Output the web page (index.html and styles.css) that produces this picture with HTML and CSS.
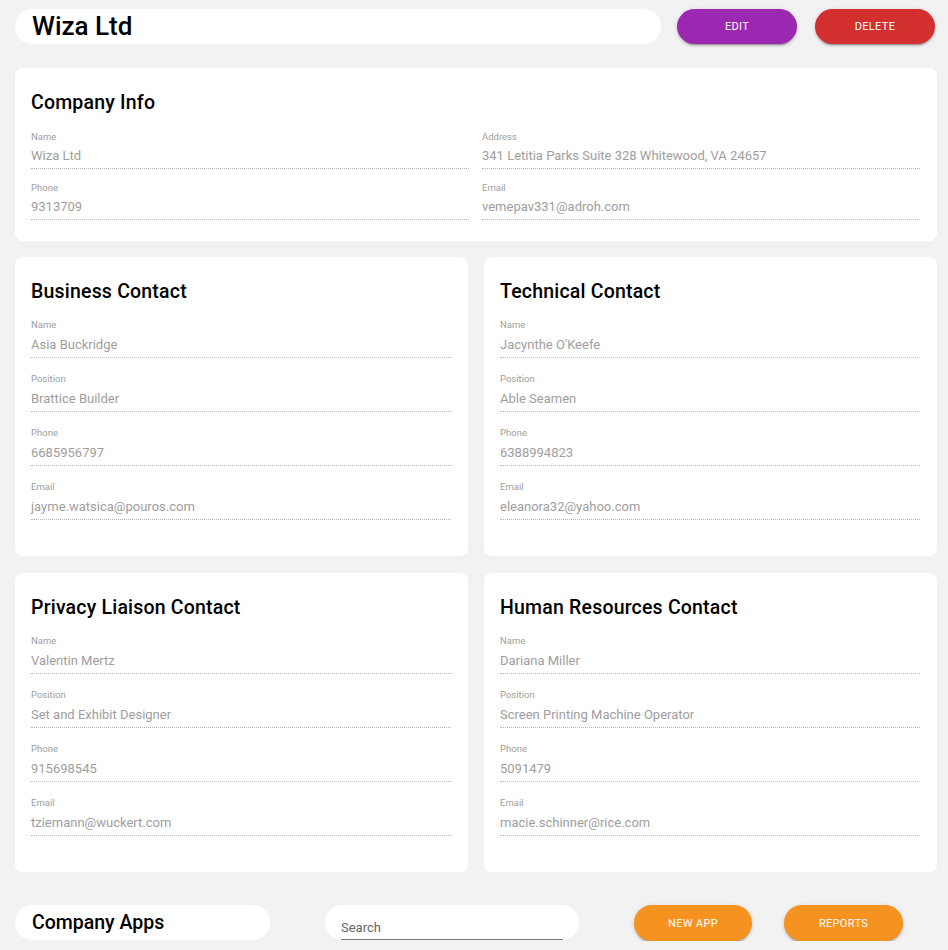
FILE: index.html
```html
<!DOCTYPE html>
<html>
<head>
<meta charset="utf-8">
<link rel="stylesheet" href="styles.css">
</head>
<body>
<div class="page">
  <div class="topbar">
    <div class="namebox">Wiza Ltd</div>
    <button class="btn btn-edit">Edit</button>
    <button class="btn btn-delete">Delete</button>
  </div>

  <section class="card info">
    <h2 class="card-title">Company Info</h2>
    <div class="info-grid">
      <div class="field"><div class="label">Name</div><div class="value">Wiza Ltd</div></div>
      <div class="field"><div class="label">Address</div><div class="value">341 Letitia Parks Suite 328 Whitewood, VA 24657</div></div>
      <div class="field"><div class="label">Phone</div><div class="value">9313709</div></div>
      <div class="field"><div class="label">Email</div><div class="value">vemepav331@adroh.com</div></div>
    </div>
  </section>

  <div class="contacts">
    <section class="card contact">
      <h2 class="card-title">Business Contact</h2>
      <div class="field"><div class="label">Name</div><div class="value">Asia Buckridge</div></div>
      <div class="field"><div class="label">Position</div><div class="value">Brattice Builder</div></div>
      <div class="field"><div class="label">Phone</div><div class="value">6685956797</div></div>
      <div class="field"><div class="label">Email</div><div class="value">jayme.watsica@pouros.com</div></div>
    </section>
    <section class="card contact">
      <h2 class="card-title">Technical Contact</h2>
      <div class="field"><div class="label">Name</div><div class="value">Jacynthe O'Keefe</div></div>
      <div class="field"><div class="label">Position</div><div class="value">Able Seamen</div></div>
      <div class="field"><div class="label">Phone</div><div class="value">6388994823</div></div>
      <div class="field"><div class="label">Email</div><div class="value">eleanora32@yahoo.com</div></div>
    </section>
    <section class="card contact">
      <h2 class="card-title">Privacy Liaison Contact</h2>
      <div class="field"><div class="label">Name</div><div class="value">Valentin Mertz</div></div>
      <div class="field"><div class="label">Position</div><div class="value">Set and Exhibit Designer</div></div>
      <div class="field"><div class="label">Phone</div><div class="value">915698545</div></div>
      <div class="field"><div class="label">Email</div><div class="value">tziemann@wuckert.com</div></div>
    </section>
    <section class="card contact">
      <h2 class="card-title">Human Resources Contact</h2>
      <div class="field"><div class="label">Name</div><div class="value">Dariana Miller</div></div>
      <div class="field"><div class="label">Position</div><div class="value">Screen Printing Machine Operator</div></div>
      <div class="field"><div class="label">Phone</div><div class="value">5091479</div></div>
      <div class="field"><div class="label">Email</div><div class="value">macie.schinner@rice.com</div></div>
    </section>
  </div>

  <div class="appsbar">
    <div class="appsbox">Company Apps</div>
    <div class="searchbox"><div class="search-input">Search</div></div>
    <button class="btn btn-orange btn-new">New App</button>
    <button class="btn btn-orange btn-reports">Reports</button>
  </div>
</div>
</body>
</html>
```

FILE: styles.css
```css
* { box-sizing: border-box; }
html, body { margin: 0; padding: 0; }
body {
  background: #f2f2f2;
  font-family: Roboto, "Liberation Sans", sans-serif;
  color: rgba(0,0,0,0.87);
}
.page {
  padding: 9px 11px 0 15px;
}
.topbar {
  display: flex;
  align-items: stretch;
  height: 35px;
}
.namebox {
  width: 646px;
  background: #fff;
  border-radius: 17px;
  padding-left: 17px;
  font-size: 26px;
  font-weight: 500;
  line-height: 35px;
  color: #000;
}
.btn {
  border: none;
  border-radius: 18px;
  color: #fff;
  font-family: Roboto, "Liberation Sans", sans-serif;
  font-size: 11px;
  font-weight: 400;
  letter-spacing: 0.03em;
  text-transform: uppercase;
  box-shadow: 0 3px 1px -2px rgba(0,0,0,.2), 0 2px 2px 0 rgba(0,0,0,.14), 0 1px 5px 0 rgba(0,0,0,.12);
  padding: 0;
}
.btn-edit { width: 120px; margin-left: 16px; background: #9c27b0; }
.btn-delete { width: 120px; margin-left: 18px; background: #d32f2f; }

.card {
  background: #fff;
  border-radius: 8px;
  padding: 16px 17px 0 16px;
}
.card-title {
  margin: 0;
  font-size: 19.5px;
  font-weight: 500;
  line-height: 38px;
  letter-spacing: 0.01em;
  color: #000;
}
.info {
  margin-top: 24px;
  height: 173px;
}
.info-grid {
  display: grid;
  grid-template-columns: 438px 438px;
  column-gap: 13px;
  row-gap: 13px;
  margin-top: 9px;
}
.field {
  border-bottom: 1px dotted #b5b5b5;
  padding-bottom: 2px;
}
.label {
  font-size: 9.5px;
  line-height: 12px;
  color: #9e9e9e;
}
.value {
  margin-top: 4px;
  font-size: 13px;
  line-height: 20px;
  color: #9e9e9e;
}
.info .value { margin-top: 3px; }
.contacts {
  display: grid;
  grid-template-columns: 453px 453px;
  column-gap: 16px;
  row-gap: 17px;
  margin-top: 16px;
}
.contact {
  height: 299px;
}
.contact .card-title { margin-bottom: 8px; }
.contact .field + .field { margin-top: 15px; }

.appsbar {
  display: flex;
  height: 36px;
  margin-top: 33px;
}
.appsbox {
  width: 255px;
  height: 35px;
  background: #fff;
  border-radius: 17px;
  padding-left: 17px;
  font-size: 19.5px;
  font-weight: 500;
  line-height: 36px;
  color: #000;
}
.searchbox {
  width: 254px;
  height: 35px;
  margin-left: 55px;
  background: #fff;
  border-radius: 17px;
  padding: 10px 16px 0;
}
.search-input {
  width: 100%;
  height: 25px;
  font-size: 13px;
  color: #666;
  line-height: 26px;
  border-bottom: 1px solid #7a7a7a;
}
.btn-orange { background: #f69320; }
.btn-new { width: 118px; margin-left: 55px; }
.btn-reports { width: 119px; margin-left: 32px; }
```
